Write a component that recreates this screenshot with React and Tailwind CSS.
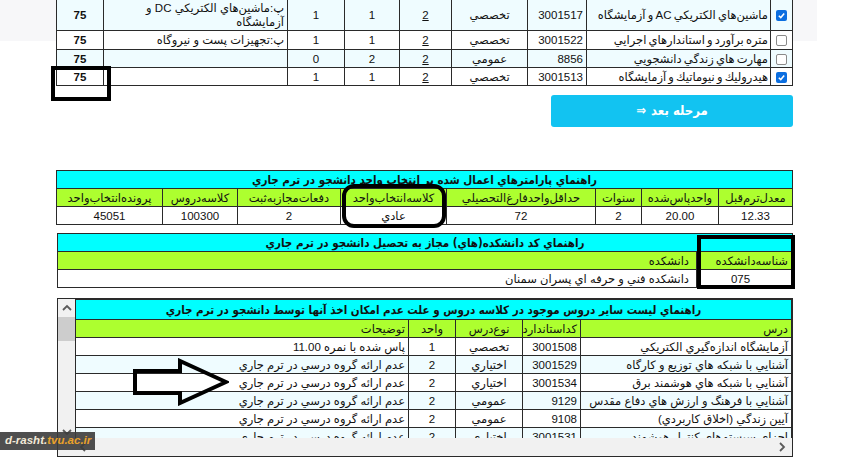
import React from "react";

const cell = "border border-[#2a2a2a] px-[3px] py-0 leading-[14px] whitespace-nowrap";
const title = "border border-[#2a2a2a] px-[3px] py-0 leading-[14px] whitespace-nowrap text-center font-bold font-['DejaVu_Sans_Condensed','DejaVu_Sans',sans-serif] text-[11.5px]";

function Check({ on }) {
  if (on)
    return (
      <span className="inline-flex h-[11px] w-[11px] items-center justify-center rounded-[2px] bg-[#0b6ee0] align-middle">
        <svg width="9" height="9" viewBox="0 0 10 10">
          <polyline points="2,5.2 4.2,7.3 8,2.8" fill="none" stroke="white" strokeWidth="1.7" />
        </svg>
      </span>
    );
  return <span className="inline-block h-[11px] w-[11px] rounded-[2px] border border-[#8a8a8a] bg-white align-middle" />;
}

function Chev({ dir }) {
  const pts = {
    up: "1,6 5,2 9,6",
    down: "1,2 5,6 9,2",
    left: "6,1 2,5 6,9",
    right: "2,1 6,5 2,9",
  }[dir];
  const v = dir === "up" || dir === "down";
  return (
    <svg width={v ? 10 : 8} height={v ? 8 : 10} viewBox={v ? "0 0 10 8" : "0 0 8 10"}>
      <polyline points={pts} fill="none" stroke="#5a5a5a" strokeWidth="1.8" />
    </svg>
  );
}

const topRows = [
  { on: true, name: "ماشين‌هاي الكتريكي AC و آزمايشگاه", code: "3001517", type: "تخصصي", a: "2", b: "1", c: "1", desc: ["پ:ماشين‌هاي الكتريكي DC و", "آزمايشگاه"], h: "h-[31px]", bg: "bg-[#effcff]" },
  { on: false, name: "متره برآورد و استاندارهاي اجرايي", code: "3001522", type: "تخصصي", a: "2", b: "1", c: "1", desc: ["پ:تجهيزات پست و نيروگاه"], h: "h-[19px]", bg: "bg-white" },
  { on: false, name: "مهارت هاي زندگي دانشجويي", code: "8856", type: "عمومي", a: "2", b: "2", c: "0", desc: [], h: "h-[18px]", bg: "bg-[#effcff]" },
  { on: true, name: "هيدروليك و نيوماتيك و آزمايشگاه", code: "3001513", type: "تخصصي", a: "2", b: "1", c: "1", desc: [], h: "h-[18px]", bg: "bg-white" },
];

const listRows = [
  ["آزمايشگاه اندازه‌گيري الكتريكي", "3001508", "تخصصي", "1", "پاس شده با نمره 11.00"],
  ["آشنايي با شبكه هاي توزيع و كارگاه", "3001529", "اختياري", "2", "عدم ارائه گروه درسي در ترم جاري"],
  ["آشنايي با شبكه هاي هوشمند برق", "3001534", "اختياري", "2", "عدم ارائه گروه درسي در ترم جاري"],
  ["آشنايي با فرهنگ و ارزش هاي دفاع مقدس", "9129", "عمومي", "2", "عدم ارائه گروه درسي در ترم جاري"],
  ["آيين زندگي (اخلاق كاربردي)", "9108", "عمومي", "2", "عدم ارائه گروه درسي در ترم جاري"],
  ["اجزاي سيستم‌هاي كنترل هوشمند", "3001531", "اختياري", "2", "عدم ارائه گروه درسي در ترم جاري"],
];

export default function App() {
  return (
    <div className="relative h-[458px] w-[848px] overflow-hidden bg-white font-['Liberation_Sans','DejaVu_Sans',sans-serif] text-[11.5px] text-[#111]">
      <div className="w-[817px] bg-[linear-gradient(to_bottom,#f7f7f9_41px,transparent_41px)] pl-[57px]">
        <div className="flex w-[736px] flex-col items-end">
          {/* top table */}
          <table dir="rtl" className="-mt-[1px] w-[736px] table-fixed border-collapse">
            <colgroup>
              <col className="w-[22px]" />
              <col className="w-[184px]" />
              <col className="w-[59px]" />
              <col className="w-[76px]" />
              <col className="w-[52px]" />
              <col className="w-[55px]" />
              <col className="w-[57px]" />
              <col className="w-[184px]" />
              <col className="w-[47px]" />
            </colgroup>
            <tbody>
              {topRows.map((r, i) => (
                <tr key={i} className={`${r.h} ${r.bg}`}>
                  <td className={`${cell} text-center`}><Check on={r.on} /></td>
                  <td className={`${cell} pr-[2px] text-right [word-spacing:-1px]`}>{r.name}</td>
                  <td className={`${cell} text-right`}>{r.code}</td>
                  <td className={`${cell} text-center`}>{r.type}</td>
                  <td className={`${cell} text-center`}><span className="underline">{r.a}</span></td>
                  <td className={`${cell} text-center`}>{r.b}</td>
                  <td className={`${cell} text-center`}>{r.c}</td>
                  <td className={`${cell} text-right leading-[13px]`}>
                    {r.desc.map((d, j) => (
                      <div key={j}>{d}</div>
                    ))}
                  </td>
                  <td className={`${cell} text-center font-bold`}>75</td>
                </tr>
              ))}
            </tbody>
          </table>

          <button className="mt-[9px] flex h-[32px] w-[242px] items-center justify-center gap-[5px] rounded-[3px] bg-[#12c3f1] font-['DejaVu_Sans_Condensed','DejaVu_Sans',sans-serif] text-[13px] font-bold text-white">
            <span>⇒</span>
            <span dir="rtl">مرحله بعد</span>
          </button>

          {/* params table */}
          <table dir="rtl" className="mt-[43px] w-[736px] table-fixed border-collapse">
            <colgroup>
              <col className="w-[74px]" />
              <col className="w-[77px]" />
              <col className="w-[46px]" />
              <col className="w-[149px]" />
              <col className="w-[106px]" />
              <col className="w-[103px]" />
              <col className="w-[75px]" />
              <col className="w-[106px]" />
            </colgroup>
            <tbody>
              <tr className="h-[18px] bg-[#00ffff]">
                <td colSpan={8} className={title}>راهنماي پارامترهاي اعمال شده بر انتخاب واحد دانشجو در ترم جاري</td>
              </tr>
              <tr className="h-[18px] bg-[#adff2f]">
                {["معدل‌ترم‌قبل", "واحدپاس‌شده", "سنوات", "حداقل‌واحدفارغ‌التحصيلي", "كلاسه‌انتخاب‌واحد", "دفعات‌مجازبه‌ثبت", "كلاسه‌دروس", "پرونده‌انتخاب‌واحد"].map((t) => (
                  <td key={t} className={`${cell} text-center`}>{t}</td>
                ))}
              </tr>
              <tr className="h-[18px] bg-white">
                {["12.33", "20.00", "2", "72", "عادي", "2", "100300", "45051"].map((t, i) => (
                  <td key={i} className={`${cell} text-center`}>{t}</td>
                ))}
              </tr>
            </tbody>
          </table>

          {/* faculty table */}
          <table dir="rtl" className="mt-[8px] w-[736px] table-fixed border-collapse">
            <colgroup>
              <col className="w-[96px]" />
              <col />
            </colgroup>
            <tbody>
              <tr className="h-[18px] bg-[#00ffff]">
                <td colSpan={2} className={title}>راهنماي كد دانشكده(هاي) مجاز به تحصيل دانشجو در ترم جاري</td>
              </tr>
              <tr className="h-[18px] bg-[#adff2f]">
                <td className={`${cell} pl-[0px] pr-[4px] text-right`}>شناسه‌دانشكده</td>
                <td className={`${cell} pr-[7px] text-right`}>دانشكده</td>
              </tr>
              <tr className="h-[18px] bg-white">
                <td className={`${cell} pl-0 pr-[8px] text-center`}>075</td>
                <td className={`${cell} pr-[7px] text-right`}>دانشكده فني و حرفه اي پسران سمنان</td>
              </tr>
            </tbody>
          </table>

          {/* list box */}
          <div className="mt-[10px] flex h-[159px] w-[736px] flex-col border border-[#2a2a2a] bg-white">
            <div className="flex min-h-0 flex-1">
              <div className="flex w-[17px] flex-col bg-[#f1f1f1]">
                <div className="flex h-[18px] items-center justify-center"><Chev dir="up" /></div>
                <div className="h-[24px] bg-[#cdcdcd]" />
                <div className="flex-1" />
                <div className="flex h-[12px] items-center justify-center"><Chev dir="down" /></div>
              </div>
              <div className="min-w-0 flex-1 overflow-hidden">
                <table dir="rtl" className="w-full table-fixed border-collapse">
                  <colgroup>
                    <col className="w-[211px]" />
                    <col className="w-[58px]" />
                    <col className="w-[67px]" />
                    <col className="w-[47px]" />
                    <col />
                  </colgroup>
                  <tbody>
                    <tr className="h-[20px] bg-[#00ffff]">
                      <td colSpan={5} className={title}>راهنماي ليست ساير دروس موجود در كلاسه دروس و علت عدم امكان اخذ آنها توسط دانشجو در ترم جاري</td>
                    </tr>
                    <tr className="h-[18px] bg-[#adff2f]">
                      <td className={`${cell} text-right`}>درس</td>
                      <td className={`${cell} px-[1px] text-right`}>كداستاندارد</td>
                      <td className={`${cell} text-center`}>نوع‌درس</td>
                      <td className={`${cell} text-center`}>واحد</td>
                      <td className={`${cell} text-right`}>توضيحات</td>
                    </tr>
                    {listRows.map((r, i) => (
                      <tr key={i} className={`h-[18px] ${i % 2 ? "bg-[#effcff]" : "bg-white"}`}>
                        <td className={`${cell} text-right`}>{r[0]}</td>
                        <td className={`${cell} text-right`}>{r[1]}</td>
                        <td className={`${cell} text-center`}>{r[2]}</td>
                        <td className={`${cell} text-center`}>{r[3]}</td>
                        <td className={`${cell} text-right`}>{r[4]}</td>
                      </tr>
                    ))}
                  </tbody>
                </table>
              </div>
            </div>
            <div className="flex h-[18px] items-center justify-between bg-[#f1f1f1] pl-[21px] pr-[6px]">
              <Chev dir="left" />
              <Chev dir="right" />
            </div>
          </div>
        </div>
      </div>

      {/* annotations */}
      <div className="absolute left-[51px] top-[66px] h-[35px] w-[60px] border-[4px] border-black" />
      <div className="absolute left-[342px] top-[184px] h-[44px] w-[104px] rounded-[12px] border-[4px] border-black" />
      <div className="absolute left-[697px] top-[235px] h-[54px] w-[98px] border-[4px] border-black" />
      <svg className="absolute left-[132px] top-[358px]" width="97" height="48" viewBox="0 0 97 48">
        <polygon points="3,13 48,13 48,3 94,24 48,45 48,35 3,35" fill="none" stroke="black" strokeWidth="4" strokeLinejoin="miter" />
      </svg>

      <div className="absolute left-0 top-[432px] flex h-[18px] w-[95px] items-center whitespace-nowrap bg-[#3c3c3c]/90 pl-[5px] text-[11.5px] font-bold italic leading-none">
        <span className="text-[#f4ead8]">d-rasht.</span>
        <span className="text-[#e9a12a]">tvu.ac.ir</span>
      </div>
    </div>
  );
}
